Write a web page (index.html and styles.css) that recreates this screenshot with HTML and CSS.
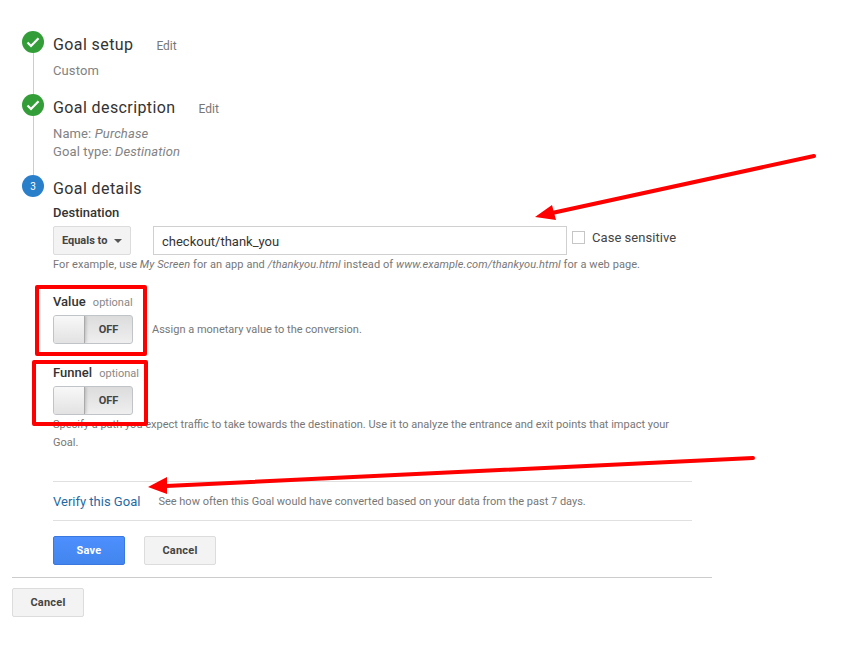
FILE: index.html
```html
<!DOCTYPE html>
<html lang="en">
<head>
    <meta charset="UTF-8">
    <title>Goal details</title>
    <link rel="stylesheet" href="styles.css">
</head>
<body>
  <div class="page">
    <div class="steps">
      <div class="step step-one">
        <div class="rail">
          <span class="circle done">
            <svg width="14" height="12" viewBox="0 0 14 12"><path d="M1.5 6.5 L5 10 L12.5 2.2" fill="none" stroke="#fff" stroke-width="2.2"/></svg>
          </span>
          <span class="line"></span>
        </div>
        <div class="step-body">
          <div class="step-head"><span class="step-title">Goal setup</span><a class="edit" href="#">Edit</a></div>
          <p class="summary summary-first">Custom</p>
        </div>
      </div>

      <div class="step step-two">
        <div class="rail">
          <span class="circle done">
            <svg width="14" height="12" viewBox="0 0 14 12"><path d="M1.5 6.5 L5 10 L12.5 2.2" fill="none" stroke="#fff" stroke-width="2.2"/></svg>
          </span>
          <span class="line"></span>
        </div>
        <div class="step-body">
          <div class="step-head"><span class="step-title">Goal description</span><a class="edit" href="#">Edit</a></div>
          <p class="summary summary-second">Name: <em>Purchase</em></p>
          <p class="summary">Goal type: <em>Destination</em></p>
        </div>
      </div>

      <div class="step">
        <div class="rail">
          <span class="circle current">3</span>
        </div>
        <div class="step-body details">
          <div class="step-head"><span class="step-title">Goal details</span></div>
          <div class="field-label">Destination</div>
          <div class="dest-row">
            <button class="select-btn">Equals to <span class="caret"></span></button>
            <input class="dest-input" type="text" value="checkout/thank_you">
            <label class="case"><span class="checkbox"></span>Case sensitive</label>
          </div>
          <p class="help">For example, use <em>My Screen</em> for an app and <em>/thankyou.html</em> instead of <em>www.example.com/thankyou.html</em> for a web page.</p>

          <div class="option option-value">
            <div class="field-label">Value <span class="optional">optional</span></div>
            <div class="toggle-row">
              <div class="toggle"><span class="knob"></span><span class="toggle-text">OFF</span></div>
              <span class="toggle-note">Assign a monetary value to the conversion.</span>
            </div>
          </div>

          <div class="option option-funnel">
            <div class="field-label">Funnel <span class="optional">optional</span></div>
            <div class="toggle-row">
              <div class="toggle"><span class="knob"></span><span class="toggle-text">OFF</span></div>
            </div>
            <p class="funnel-note">Specify a path you expect traffic to take towards the destination. Use it to analyze the entrance and exit points that impact your Goal.</p>
          </div>

          <div class="verify">
            <a class="verify-link" href="#">Verify this Goal</a>
            <span class="verify-note">See how often this Goal would have converted based on your data from the past 7 days.</span>
          </div>

          <div class="actions">
            <button class="btn btn-primary">Save</button>
            <button class="btn">Cancel</button>
          </div>
        </div>
      </div>
    </div>

    <div class="footer">
      <button class="btn">Cancel</button>
    </div>
  </div>

  <!-- annotations on top of the screenshot -->
  <div class="mark mark-value"></div>
  <div class="mark mark-funnel"></div>
  <svg class="arrows" width="864" height="647" viewBox="0 0 864 647">
    <line x1="814" y1="156" x2="552" y2="213" stroke="#f00" stroke-width="4" stroke-linecap="round"/>
    <polygon points="535,217 552,205 556,220" fill="#f00"/>
    <line x1="753" y1="458" x2="166" y2="486" stroke="#f00" stroke-width="4" stroke-linecap="round"/>
    <polygon points="148,487 167,477 167,494" fill="#f00"/>
  </svg>
</body>
</html>
```

FILE: styles.css
```css
body {
  margin: 0;
  font-family: Roboto, "Liberation Sans", sans-serif;
  color: #333;
  background-color: #fff;
}

.page {
  width: 700px;
  padding: 31px 0 0 12px;
}

.steps {
  margin-left: 10px;
}

.step {
  display: flex;
  gap: 9px;
}

.step-one {
  height: 63px;
}

.step-two {
  height: 81px;
}

.rail {
  display: flex;
  flex-direction: column;
  align-items: center;
  width: 22px;
  flex-shrink: 0;
}

.circle {
  display: flex;
  align-items: center;
  justify-content: center;
  width: 22px;
  height: 22px;
  border-radius: 50%;
  color: #fff;
  font-size: 10px;
  flex-shrink: 0;
}

.done {
  background-color: #339e37;
}

.current {
  background-color: #2a7fcb;
}

.line {
  flex: 1;
  width: 1px;
  background-color: #ccc;
}

.step-body {
  flex: 1;
}

.step-head {
  display: flex;
  align-items: baseline;
  height: 28px;
  line-height: 28px;
}

.step-title {
  font-size: 16px;
  color: #333;
  letter-spacing: 0.4px;
}

.edit {
  margin-left: 23px;
  font-size: 12px;
  color: #777;
  text-decoration: none;
}

.summary {
  margin: 0;
  font-size: 13px;
  line-height: 18px;
  color: #828282;
  letter-spacing: 0.12px;
}

.summary-first {
  margin-top: 3px;
}

.summary-second {
  margin-top: 3px;
}

.field-label {
  font-size: 13px;
  font-weight: 500;
  line-height: 16px;
  color: #333;
}

.details .step-head + .field-label {
  margin-top: 2px;
}

.dest-row {
  display: flex;
  align-items: center;
  margin-top: 5px;
}

.select-btn {
  width: 78px;
  height: 29px;
  padding: 0;
  border: 1px solid #dcdcdc;
  border-radius: 2px;
  background-color: #f3f3f3;
  font-family: inherit;
  font-size: 11px;
  font-weight: 700;
  color: #444;
}

.caret {
  display: inline-block;
  margin-left: 4px;
  vertical-align: middle;
  border-left: 4px solid transparent;
  border-right: 4px solid transparent;
  border-top: 4px solid #555;
}

.dest-input {
  box-sizing: border-box;
  width: 414px;
  height: 29px;
  margin-left: 22px;
  padding: 1px 8px 0;
  border: 1px solid #d0d0d0;
  font-family: inherit;
  font-size: 13px;
  color: #333;
}

.case {
  display: flex;
  align-items: center;
  margin-left: 5px;
  padding-bottom: 6px;
  font-size: 13px;
  letter-spacing: 0.05px;
  color: #444;
}

.checkbox {
  width: 11px;
  height: 11px;
  margin-right: 7px;
  border: 1px solid #c6c6c6;
}

.help {
  margin: 2px 0 0;
  font-size: 11px;
  line-height: 15px;
  color: #777;
  letter-spacing: 0.08px;
  white-space: nowrap;
}

.option-value {
  margin-top: 22px;
}

.option-funnel {
  margin-top: 21px;
}

.optional {
  margin-left: 4px;
  font-size: 11px;
  font-weight: 400;
  color: #888;
}

.toggle-row {
  display: flex;
  align-items: center;
  margin-top: 4px;
}

.toggle {
  box-sizing: border-box;
  display: flex;
  width: 80px;
  height: 29px;
  border: 1px solid #c0c4c8;
  border-radius: 3px;
  background: linear-gradient(#dcdcdc, #efefef);
  overflow: hidden;
}

.knob {
  box-sizing: border-box;
  width: 31px;
  border-right: 1px solid #aaa;
  background: linear-gradient(#f8f8f8, #e2e2e2);
  box-shadow: 1px 0 3px rgba(0, 0, 0, 0.2);
}

.toggle-text {
  flex: 1;
  text-align: center;
  font-size: 11px;
  font-weight: 700;
  line-height: 27px;
  color: #444;
}

.toggle-note {
  margin-left: 19px;
  font-size: 11px;
  color: #777;
}

.funnel-note {
  width: 630px;
  margin: 0;
  padding-top: 1px;
  font-size: 11px;
  line-height: 18px;
  color: #777;
}

.verify {
  display: flex;
  align-items: center;
  width: 639px;
  height: 38px;
  margin-top: 29px;
  border-top: 1px solid #e0e0e0;
  border-bottom: 1px solid #e0e0e0;
}

.verify-link {
  font-size: 13px;
  color: #1f6aa5;
  text-decoration: none;
}

.verify-note {
  margin-left: 18px;
  font-size: 11px;
  color: #777;
}

.actions {
  display: flex;
  gap: 19px;
  margin-top: 15px;
}

.btn {
  box-sizing: border-box;
  width: 72px;
  height: 29px;
  padding: 0;
  border: 1px solid #dcdcdc;
  border-radius: 2px;
  background-color: #f3f3f3;
  font-family: inherit;
  font-size: 11px;
  font-weight: 700;
  letter-spacing: 0.2px;
  color: #444;
}

.btn-primary {
  border-color: #3a78e0;
  background: linear-gradient(#4d90fe, #4285ee);
  color: #fff;
}

.footer {
  margin-top: 12px;
  padding-top: 10px;
  border-top: 1px solid #ccc;
}

/* red boxes and arrows drawn over the page */
.mark {
  position: absolute;
  box-sizing: border-box;
  border: 4px solid #f00;
  border-radius: 2px;
}

.mark-value {
  left: 35px;
  top: 285px;
  width: 112px;
  height: 71px;
}

.mark-funnel {
  left: 32px;
  top: 360px;
  width: 116px;
  height: 66px;
}

.arrows {
  position: absolute;
  left: 0;
  top: 0;
  pointer-events: none;
}
```
